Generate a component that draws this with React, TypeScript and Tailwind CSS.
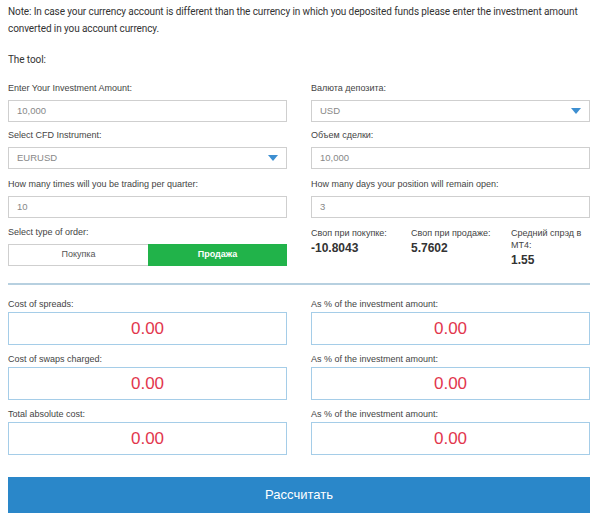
import { ReactNode } from 'react'

const Label = ({ children }: { children: ReactNode }) => (
  <div className="text-[9px] leading-[14px] text-[#444] mb-[5px]">{children}</div>
)

const TextInput = ({ value }: { value: string }) => (
  <div className="h-[22px] border border-[#cfcfcf] bg-white flex items-center px-[8px] text-[9.5px] text-[#888]">
    {value}
  </div>
)

const Select = ({ value }: { value: string }) => (
  <div className="h-[22px] border border-[#cfcfcf] bg-white flex items-center justify-between px-[8px] text-[9.5px] text-[#888]">
    <span>{value}</span>
    <svg width="10" height="6" viewBox="0 0 10 6">
      <path d="M0 0 L10 0 L5 6 Z" fill="#3d8fd1" />
    </svg>
  </div>
)

const Result = ({ label }: { label: string }) => (
  <div>
    <div className="text-[9px] leading-[12px] text-[#444] mb-[2px]">{label}</div>
    <div className="h-[33px] border border-[#a5cde8] bg-white flex items-center justify-center text-[17px] text-[#e2364d]">
      0.00
    </div>
  </div>
)

const Stat = ({ label, value, className }: { label: string; value: string; className: string }) => (
  <div className={className}>
    <div className="text-[9px] leading-[12px] text-[#444]">{label}</div>
    <div className="text-[12px] leading-[16px] font-semibold text-[#333] mt-[1px]">{value}</div>
  </div>
)

export default function App() {
  return (
    <div className="bg-white w-[600px] h-[515px] overflow-hidden pl-[8px] pr-[10px] font-['Liberation_Sans',Arial,sans-serif]">
      <p className="font-['Roboto',sans-serif] text-[10px] tracking-[-0.1px] leading-[17px] text-[#333] pt-[3px]">
        Note: In case your currency account is different than the currency in which you deposited funds please enter
        the investment amount converted in you account currency.
      </p>
      <p className="font-['Roboto',sans-serif] text-[10px] tracking-[-0.1px] leading-[17px] text-[#333] mt-[14px]">
        The tool:
      </p>

      <div className="grid grid-cols-2 gap-x-[24px] mt-[13px]">
        <div className="flex flex-col">
          <div>
            <Label>Enter Your Investment Amount:</Label>
            <TextInput value="10,000" />
          </div>
          <div className="mt-[6px]">
            <Label>Select CFD Instrument:</Label>
            <Select value="EURUSD" />
          </div>
          <div className="mt-[8px]">
            <Label>How many times will you be trading per quarter:</Label>
            <TextInput value="10" />
          </div>
          <div className="mt-[7px]">
            <Label>Select type of order:</Label>
            <div className="flex h-[22px] text-[9px]">
              <div className="flex-1 border border-[#cfcfcf] border-r-0 flex items-center justify-center text-[#555]">
                Покупка
              </div>
              <div className="flex-1 bg-[#21b34a] flex items-center justify-center text-white font-semibold">
                Продажа
              </div>
            </div>
          </div>
        </div>

        <div className="flex flex-col">
          <div>
            <Label>Валюта депозита:</Label>
            <Select value="USD" />
          </div>
          <div className="mt-[6px]">
            <Label>Объем сделки:</Label>
            <TextInput value="10,000" />
          </div>
          <div className="mt-[8px]">
            <Label>How many days your position will remain open:</Label>
            <TextInput value="3" />
          </div>
          <div className="flex mt-[9px]">
            <Stat className="w-[100px] shrink-0" label="Своп при покупке:" value="-10.8043" />
            <Stat className="w-[100px] shrink-0" label="Своп при продаже:" value="5.7602" />
            <Stat className="flex-1" label="Средний спрэд в MT4:" value="1.55" />
          </div>
        </div>
      </div>

      <div className="h-[2px] bg-[#b7d0e0] mt-[15px]" />

      <div className="grid grid-cols-2 gap-x-[24px] gap-y-[8px] mt-[13px]">
        <Result label="Cost of spreads:" />
        <Result label="As % of the investment amount:" />
        <Result label="Cost of swaps charged:" />
        <Result label="As % of the investment amount:" />
        <Result label="Total absolute cost:" />
        <Result label="As % of the investment amount:" />
      </div>

      <button className="mt-[22px] w-full h-[36px] bg-[#2a87c9] text-white text-[13px] flex items-center justify-center">
        Рассчитать
      </button>
    </div>
  )
}
